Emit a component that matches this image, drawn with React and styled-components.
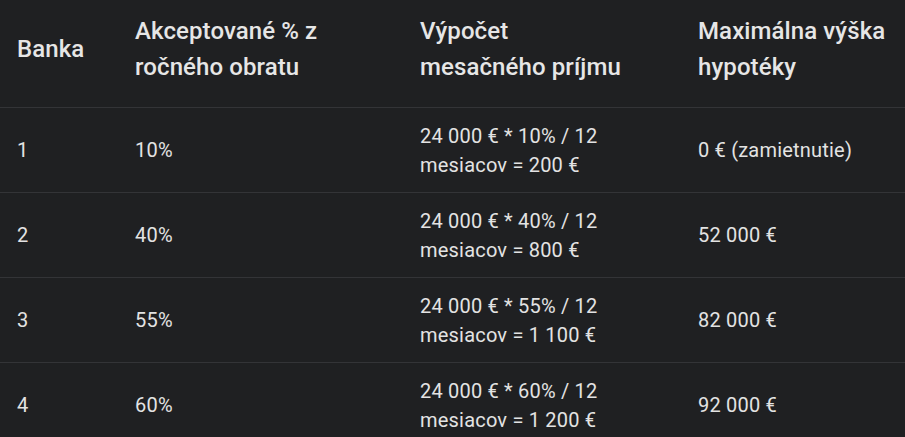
import React from 'react'
import styled, { createGlobalStyle } from 'styled-components'

const GlobalStyle = createGlobalStyle`
  html, body {
    margin: 0;
    padding: 0;
    background: #1f2022;
  }
  body {
    font-family: Roboto, "Noto Sans", "Liberation Sans", sans-serif;
    color: #e3e3e3;
  }
`;

const Table = styled.div`
  width: 905px;
  overflow: hidden;
  background: #1f2022;
`;

const Row = styled.div`
  display: grid;
  grid-template-columns: 118px 285px 278px 1fr;
  border-bottom: 1px solid #333437;
  padding: ${p => (p.head ? '13px 0 22px' : '13px 0 12px')};
  min-height: ${p => (p.head ? '72px' : '59px')};
`;

const Cell = styled.div`
  display: flex;
  align-items: center;
  padding: 0 17px;
  font-size: ${p => (p.head ? '24px' : '20px')};
  line-height: ${p => (p.head ? '36px' : '29px')};
  font-weight: ${p => (p.head ? 500 : 400)};
  letter-spacing: ${p => (p.head ? '0.1px' : '0.2px')};
  color: ${p => (p.head ? '#e6e6e6' : '#e3e3e3')};
`;

const headers = [
  ['Banka'],
  ['Akceptované % z', 'ročného obratu'],
  ['Výpočet', 'mesačného príjmu'],
  ['Maximálna výška', 'hypotéky'],
];

const rows = [
  ['1', '10%', '24 000 € * 10% / 12 mesiacov = 200 €', '0 € (zamietnutie)'],
  ['2', '40%', '24 000 € * 40% / 12 mesiacov = 800 €', '52 000 €'],
  ['3', '55%', '24 000 € * 55% / 12 mesiacov = 1 100 €', '82 000 €'],
  ['4', '60%', '24 000 € * 60% / 12 mesiacov = 1 200 €', '92 000 €'],
];

const App = () => {
  return (
    <>
      <GlobalStyle />
      <Table>
        <Row head>
          {headers.map(lines => (
            <Cell head key={lines[0]}>
              <span>
                {lines.map((l, i) => (
                  <React.Fragment key={i}>
                    {i > 0 && <br />}
                    {l}
                  </React.Fragment>
                ))}
              </span>
            </Cell>
          ))}
        </Row>
        {rows.map(r => (
          <Row key={r[0]}>
            {r.map((c, i) => (
              <Cell key={i}>{c}</Cell>
            ))}
          </Row>
        ))}
      </Table>
    </>
  )
}

export default App
